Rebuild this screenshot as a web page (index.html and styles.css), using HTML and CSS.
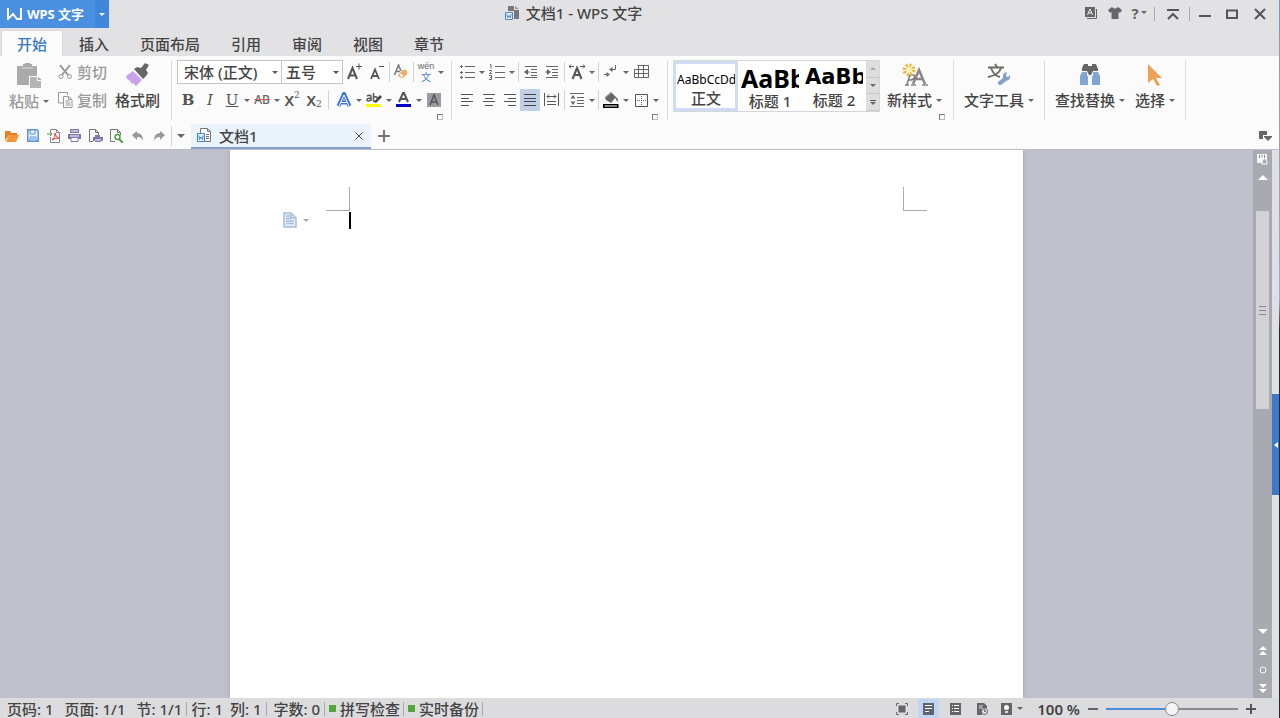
FILE: index.html
```html
<!DOCTYPE html>
<html lang="zh-Hans">
<head>
  <meta charset="UTF-8" />
  <meta name="viewport" content="width=device-width, initial-scale=1.0" />
  <title>文档1 - WPS 文字</title>
  <link rel="stylesheet" href="styles.css">
</head>
<body>
  <header class="titlebar">
    <button class="brand">
      <svg width="15" height="12" viewBox="0 0 15 12"><path d="M1 0v11l5-5 4 5h4V0" fill="none" stroke="#fff" stroke-width="2"/></svg>
      <span>WPS 文字</span>
    </button>
    <button class="brand-menu drop" aria-label="主菜单"></button>
    <h1 class="title">
      <svg width="16" height="16" viewBox="0 0 16 16"><path d="M4 1h6v4h5v9H10V6H4z" fill="#777"/><path d="M11 1l4 3h-4z" fill="#999"/><path d="M1.500 7.500h7v7h-7z" fill="#edf3fb" stroke="#4c86c8"/><path d="M3 9l.5 4L5 10.500 6.500 13 7 9" fill="none" stroke="#4c86c8"/></svg>
      文档1 - WPS 文字
    </h1>
    <div class="window-tools">
      <button class="wt" aria-label="字体"><svg width="12" height="12" viewBox="0 0 12 12"><path d="M0 0h10v10H0z" fill="#666"/><path d="M11.500 2v9.500H2" fill="none" stroke="#666"/><path d="M2.500 8L5 2l2.500 6M3.500 6h3" fill="none" stroke="#eee"/></svg></button>
      <button class="wt" aria-label="皮肤"><svg width="14" height="12" viewBox="0 0 14 12"><path d="M4 0q3 3 6 0l4 3-2 3-1.500-1v7h-7V5L2 6 0 3z" fill="#666"/></svg></button>
      <button class="wt help" aria-label="帮助">?<i class="arrow"></i></button>
      <span class="sep"></span>
      <button class="wt wide" aria-label="折叠功能区"><svg width="14" height="12" viewBox="0 0 14 12"><path d="M1 2h12M2 11l5-5 5 5" fill="none" stroke="#555" stroke-width="2"/></svg></button>
      <span class="sep slim"></span>
      <button class="wt wide" aria-label="最小化"><svg width="12" height="12" viewBox="0 0 12 12"><path d="M0 8h12" stroke="#555" stroke-width="2"/></svg></button>
      <button class="wt max" aria-label="最大化"><svg width="12" height="10" viewBox="0 0 12 10"><path d="M1 1.500h10v7.500H1z" fill="none" stroke="#555" stroke-width="2"/></svg></button>
      <button class="wt close" aria-label="关闭"><svg width="12" height="12" viewBox="0 0 12 12"><path d="M1 1l10 10M11 1L1 11" stroke="#555" stroke-width="2"/></svg></button>
    </div>
  </header>

  <nav class="menu-tabs">
    <a class="active" href="#">开始</a>
    <a href="#">插入</a>
    <a href="#">页面布局</a>
    <a href="#">引用</a>
    <a href="#">审阅</a>
    <a href="#">视图</a>
    <a href="#">章节</a>
  </nav>

  <section class="ribbon">
    <div class="group clipboard">
      <button class="big disabled">
        <svg width="26" height="26" viewBox="0 0 26 26"><path d="M1 3h6V1h2V0h5v1h2v2h5v10h-8v9H1z" fill="#aaa"/><path d="M6 5h11" stroke="#ddd"/><path d="M14 14h7v4h4v7H14z" fill="#b5b5b5"/><path d="M22 13.500v3.500h3.500z" fill="#aaa"/></svg>
        <span class="label">粘贴<i class="arrow"></i></span>
      </button>
      <div class="stack">
        <button class="small disabled">
          <svg width="15" height="16" viewBox="0 0 15 16"><path d="M2 1l8 10M12 1L4 11" stroke="#999" stroke-width="2"/><circle cx="3" cy="12.500" r="2" fill="none" stroke="#999"/><circle cx="11.500" cy="12.500" r="2" fill="none" stroke="#999"/></svg>
          剪切
        </button>
        <button class="small disabled">
          <svg width="15" height="16" viewBox="0 0 15 16"><path d="M5 11H.5V.5h9V3" fill="none" stroke="#999"/><path d="M5.500 4.500h5l3.500 3v8H5.500zM10.500 4.500v3H14M7.500 9h4M7.500 11h5M7.500 13h5" fill="none" stroke="#999"/></svg>
          复制
        </button>
      </div>
      <button class="big">
        <svg width="24" height="24" viewBox="0 0 24 24"><path d="M7 8l9 9-6 6-3-3-1 1-2-3-3-2-1-3z" fill="#c9a2ea"/><path d="M8 6l3-2 4 1 4-5 4 2-3 5 2 3-2 3-3 3z" fill="#666"/></svg>
        <span class="label">格式刷</span>
      </button>
    </div>

    <div class="group font">
      <div class="row">
        <select class="font-name" aria-label="字体名称"><option>宋体 (正文)</option></select>
        <select class="font-size" aria-label="字号"><option>五号</option></select>
        <button class="tool" aria-label="增大字号"><svg width="16" height="18" viewBox="0 0 16 18"><path d="M2 16L6.500 5 11 16M3.500 12.500h6" fill="none" stroke="#555" stroke-width="2"/><path d="M10 3.500h6M13 .5v6" stroke="#555"/></svg></button>
        <button class="tool" aria-label="减小字号"><svg width="16" height="18" viewBox="0 0 16 18"><path d="M3 16L7 6.500 11 16M4.500 13h5" fill="none" stroke="#555" stroke-width="1.800"/><path d="M11 3.500h5" stroke="#555"/></svg></button>
        <span class="sep slim"></span>
        <button class="tool narrow" aria-label="清除格式"><svg width="16" height="16" viewBox="0 0 16 16"><path d="M1.500 11L5.500 1 8 7M3 7.500h4" fill="none" stroke="#777" stroke-width="1.500"/><path d="M5 11l5-5q2-1 3.500.5T14 10l-4 4q-3 1-5-3z" fill="#efab68"/><path d="M6.500 11l1.500-1.500 2.500 2.500L9 13.500z" fill="#fff"/></svg></button>
        <span class="sep slim"></span>
        <button class="tool pinyin" aria-label="拼音指南"><small>wén</small><b>文</b></button>
        <button class="drop" aria-label="拼音选项"></button>
      </div>
      <div class="row">
        <button class="tool letter bold">B</button>
        <button class="tool letter italic">I</button>
        <button class="tool letter underline">U</button>
        <button class="drop" aria-label="下划线样式"></button>
        <button class="tool strike">AB</button>
        <button class="drop" aria-label="删除线选项"></button>
        <button class="tool script">X<sup>2</sup></button>
        <button class="tool script">X<sub>2</sub></button>
        <span class="sep"></span>
        <button class="tool" aria-label="文字效果"><svg width="16" height="16" viewBox="0 0 16 16"><path d="M2.500 14L8 2l5.500 12M4.500 10.500h7" fill="none" stroke="#c5d9f8" stroke-width="5"/><path d="M2.500 14L8 2l5.500 12M4.500 10.500h7" fill="none" stroke="#3b6fd0" stroke-width="3.500"/><path d="M3 14L8 3l5 11M5 10.500h6" fill="none" stroke="#fff"/></svg></button>
        <button class="drop" aria-label="文字效果选项"></button>
        <button class="tool" aria-label="突出显示"><svg width="16" height="16" viewBox="0 0 16 16"><path d="M1 4q4-2 4 1v4M5 6Q1 6 1 8t4 0M7.500 1v8q4 1 4-2t-4-2" fill="none" stroke="#555" stroke-width="1.500"/><path d="M8 10l6-7 2 2-6 6z" fill="#444"/><path d="M0 12h15v3H0z" fill="#ff0"/></svg></button>
        <button class="drop" aria-label="突出显示颜色"></button>
        <button class="tool" aria-label="字体颜色"><svg width="16" height="16" viewBox="0 0 16 16"><path d="M3 10L7.500 0 12 10M5 7h5" fill="none" stroke="#555" stroke-width="2"/><path d="M0 12h15v3H0z" fill="#0000c8"/></svg></button>
        <button class="drop" aria-label="选择字体颜色"></button>
        <button class="tool" aria-label="字符底纹"><svg width="14" height="14" viewBox="0 0 14 14"><path d="M0 0h14v14H0z" fill="#999ca3"/><path d="M3 12L7 2l4 10M4 9h6" fill="none" stroke="#555" stroke-width="1.500"/></svg></button>
      </div>
      <button class="launcher" aria-label="字体设置"></button>
    </div>

    <div class="group paragraph">
      <div class="row">
        <button class="tool" aria-label="项目符号"><svg width="15" height="14" viewBox="0 0 15 14"><path d="M5 1.500h10M5 7.500h10M5 12.500h10M0 1.500h3M1.500 0v3M0 7.500h3M1.500 6v3M0 12.500h3M1.500 11v3" stroke="#666"/></svg></button>
        <button class="drop" aria-label="项目符号选项"></button>
        <button class="tool" aria-label="编号"><svg width="16" height="16" viewBox="0 0 16 16"><path d="M6 2.500h10M6 8.500h10M6 13.500h10M1 .5h1v4M0 6.500h2.500v1L.5 9.500H3M0 11.500h2.500v4H0M1 13.500h1.500" fill="none" stroke="#666"/></svg></button>
        <button class="drop" aria-label="编号选项"></button>
        <span class="sep slim"></span>
        <button class="tool" aria-label="减少缩进"><svg width="14" height="14" viewBox="0 0 14 14"><path d="M1 1.500h12M7 4.500h6M7 7.500h6M7 10.500h6M1 12.500h12M1 7h5" stroke="#666"/><path d="M0 7l4-3v6z" fill="#666"/></svg></button>
        <button class="tool narrow" aria-label="增加缩进"><svg width="14" height="14" viewBox="0 0 14 14"><path d="M1 1.500h12M7 4.500h6M7 7.500h6M7 10.500h6M1 12.500h12M0 7h4" stroke="#666"/><path d="M6 7L2 4v6z" fill="#666"/></svg></button>
        <span class="sep slim"></span>
        <button class="tool" aria-label="中文版式"><svg width="16" height="16" viewBox="0 0 16 16"><path d="M3.500 15L8 4l4.500 11M5 11h6" fill="none" stroke="#555" stroke-width="2"/><path d="M0 2.500h5M11 2.500h5M2 .5l-2 2 2 2M14 .5l2 2-2 2" fill="none" stroke="#555"/></svg></button>
        <button class="drop" aria-label="中文版式选项"></button>
        <span class="sep slim"></span>
        <button class="tool" aria-label="显示段落标记"><svg width="14" height="14" viewBox="0 0 14 14"><path d="M11.500 0v4.500H6M0 9.500h5" fill="none" stroke="#666"/><path d="M5 4.500L8.500 2v5zM6 9.500L2.500 7v5z" fill="#666"/></svg></button>
        <button class="drop" aria-label="段落标记选项"></button>
        <button class="tool" aria-label="插入表格"><svg width="15" height="14" viewBox="0 0 15 14"><path d="M3.500.5h11v12H.5v-8h14M4.500.5v12M9.500.5v12M.5 8.500h14" fill="none" stroke="#666"/></svg></button>
      </div>
      <div class="row">
        <button class="tool" aria-label="左对齐"><svg width="12" height="12" viewBox="0 0 12 12"><path d="M0 .5h12M0 4.500h8M0 7.500h12M0 11.500h8" stroke="#555"/></svg></button>
        <button class="tool" aria-label="居中"><svg width="12" height="12" viewBox="0 0 12 12"><path d="M0 .5h12M2 4.500h8M0 7.500h12M2 11.500h8" stroke="#555"/></svg></button>
        <button class="tool narrow" aria-label="右对齐"><svg width="12" height="12" viewBox="0 0 12 12"><path d="M0 .5h12M4 4.500h8M0 7.500h12M4 11.500h8" stroke="#555"/></svg></button>
        <button class="tool narrow selected" aria-label="两端对齐"><svg width="12" height="12" viewBox="0 0 12 12"><path d="M0 .5h12M0 4.500h12M0 7.500h12M0 11.500h12" stroke="#444"/></svg></button>
        <button class="tool" aria-label="分散对齐"><svg width="15" height="14" viewBox="0 0 15 14"><path d="M.5 0v13M14.500 0v13M3 3.500h9M3 8.500h9M3 11.500h9M5 1.500l-2 2 2 2M10 1.500l2 2-2 2" fill="none" stroke="#555"/></svg></button>
        <span class="sep slim"></span>
        <button class="tool" aria-label="行距"><svg width="15" height="14" viewBox="0 0 15 14"><path d="M0 .5h14M7 4.500h7M7 7.500h7M7 10.500h7M0 13.500h14" stroke="#666"/><path d="M3 2L.5 5.500h5zM3 12L.5 8.500h5z" fill="#666"/></svg></button>
        <button class="drop" aria-label="行距选项"></button>
        <span class="sep slim"></span>
        <button class="tool" aria-label="底纹颜色"><svg width="16" height="16" viewBox="0 0 16 16"><path d="M2 5l6-5 5 5-5 6-5-3zM12 5q3 0 3 5-2-1-3-5z" fill="#666"/><path d="M3 5l5-4" stroke="#aaa"/><path d="M.75 12.750h14v2.500h-14z" fill="#fff" stroke="#000" stroke-width="1.500"/></svg></button>
        <button class="drop" aria-label="选择底纹"></button>
        <button class="tool" aria-label="边框"><svg width="13" height="13" viewBox="0 0 13 13"><path d="M.5.5h12v12H.5z" fill="none" stroke="#555"/><path d="M6.500 2v10M2 6.500h10" stroke="#666" stroke-dasharray="1 1"/></svg></button>
        <button class="drop" aria-label="边框选项"></button>
      </div>
      <button class="launcher" aria-label="段落设置"></button>
    </div>

    <div class="group styles">
      <div class="big-row">
        <div class="gallery">
          <button class="style-item current"><span class="sample">AaBbCcDd</span><span class="name">正文</span></button>
          <button class="style-item"><span class="sample h1">AaBb</span><span class="name">标题 1</span></button>
          <button class="style-item"><span class="sample h2">AaBb</span><span class="name">标题 2</span></button>
          <div class="gallery-scroll">
            <button aria-label="向上"><i class="arrow up"></i></button>
            <button aria-label="向下"><i class="arrow"></i></button>
            <button class="more" aria-label="更多样式"><i class="arrow"></i></button>
          </div>
        </div>
        <button class="big">
          <svg width="26" height="24" viewBox="0 0 26 24"><path d="M11 21l6-14 6 14M14 16h7" fill="none" stroke="#888" stroke-width="2.500"/><path d="M9 22h5M20 22h6" stroke="#888" stroke-width="1.500"/><path d="M5 21l3-9h4q2 4-3 5H7M3 22h4" fill="none" stroke="#777" stroke-width="1.500"/><circle cx="7" cy="7" r="4.500" fill="none" stroke="#f0b840" stroke-width="4" stroke-dasharray="2 1.500"/><circle cx="7" cy="7" r="2" fill="#fff3b0"/></svg>
          <span class="label">新样式<i class="arrow"></i></span>
        </button>
      </div>
      <button class="launcher" aria-label="样式设置"></button>
    </div>

    <div class="group tools">
      <button class="big">
        <svg width="24" height="24" viewBox="0 0 24 24"><path d="M1 4.500h16M8 1l2 3M4 5q3 8 9 9M14 5q-2 7-13 9" fill="none" stroke="#6c6c64" stroke-width="1.800"/><path d="M11 19l5-4q-1-5 4-6l-1 4 2 1 2-2q1 5-4 6l-5 4q-4 0-3-3z" fill="#869fcb"/></svg>
        <span class="label">文字工具<i class="arrow"></i></span>
      </button>
    </div>

    <div class="group find">
      <button class="big">
        <svg width="22" height="24" viewBox="0 0 22 24"><path d="M5 1h4v2h4V1h4l2 5v2h-5l-2 4h-2L8 8H3V5z" fill="#666"/><path d="M3 9h5v4h1v9H1v-9zM14 9h5l2 4v9h-8v-9h1z" fill="#83a5d1"/></svg>
        <span class="label">查找替换<i class="arrow"></i></span>
      </button>
      <button class="big">
        <svg width="16" height="24" viewBox="0 0 16 24"><path d="M1 1l14 14H9l4 7-3 1-4-7-5 4z" fill="#ee9f58"/></svg>
        <span class="label">选择<i class="arrow"></i></span>
      </button>
    </div>
  </section>

  <div class="doc-bar">
    <button class="quick" aria-label="打开"><svg width="14" height="12" viewBox="0 0 14 12"><path d="M0 11V1h5l1 2h6v2H4z" fill="#e87e1c"/><path d="M4 5h10l-3 7H1z" fill="#f39537"/></svg></button>
    <button class="quick" aria-label="保存"><svg width="12" height="13" viewBox="0 0 12 13"><path d="M.750.750h9l1.500 1.500v10H.75z" fill="#e9f2fc" stroke="#5b92d8" stroke-width="1.500"/><path d="M3 1v4h5V1M3 12V8h6v4M4 10h4" fill="none" stroke="#5b92d8"/></svg></button>
    <button class="quick" aria-label="输出为PDF"><svg width="13" height="14" viewBox="0 0 13 14"><path d="M3.500 3V.5h6l3 3v10h-9V8M9.500.5v3h3" fill="none" stroke="#888"/><path d="M0 5h4M3 3l2 2-2 2" fill="none" stroke="#4c9b50"/><path d="M5 11q4-3 3-7 1 5 4 5-4 0-7 2z" fill="none" stroke="#d5423b"/></svg></button>
    <button class="quick" aria-label="打印"><svg width="13" height="13" viewBox="0 0 13 13"><path d="M2 0h9v4H2zM0 5h13v5H0z" fill="#7e79ad"/><path d="M3 2h7M2 7h9" stroke="#fff"/><path d="M3 8.500h7v4H3z" fill="#fff" stroke="#7e79ad"/></svg></button>
    <button class="quick" aria-label="打印设置"><svg width="14" height="14" viewBox="0 0 14 14"><path d="M4 12.500H.5V.5h6l3 3V6M6.500.5v3h3" fill="none" stroke="#777"/><path d="M6 6h5v2H6zM4 8h10v4H4zM6 10h6v3H6z" fill="#7e79ad"/><path d="M6 11h6" stroke="#fff"/></svg></button>
    <button class="quick" aria-label="打印预览"><svg width="13" height="14" viewBox="0 0 13 14"><path d="M5 12.500H.5V.5h7l3 3V6M7.500.5v3h3" fill="none" stroke="#777"/><circle cx="7.500" cy="8" r="2.500" fill="#fff" stroke="#529b4b" stroke-width="1.500"/><path d="M9 10l4 4" stroke="#529b4b" stroke-width="2"/></svg></button>
    <button class="quick" aria-label="撤消"><svg width="12" height="10" viewBox="0 0 12 10"><path d="M0 4l5-4v2q6 0 6 8-1-4-6-4v3z" fill="#999"/></svg></button>
    <button class="quick" aria-label="恢复"><svg width="12" height="10" viewBox="0 0 12 10"><path d="M12 4L7 0v2Q1 2 1 10q1-4 6-4v3z" fill="#999"/></svg></button>
    <span class="sep slim"></span>
    <button class="quick-more" aria-label="自定义快速访问"><i class="arrow"></i></button>
    <div class="doc-tab">
      <svg width="15" height="15" viewBox="0 0 15 15"><path d="M3.500 6V.5h7l3 3v10h-6M10.500.5v3h3M9 6.500h3M9 8.500h3M9 10.500h3" fill="#fff" stroke="#777"/><path d="M.5 5.500h7v8h-7z" fill="#e8f1fb" stroke="#4384cc"/><path d="M2 7.500l.5 4L4 9l1.500 2.500.5-4" fill="none" stroke="#4384cc"/></svg>
      <span class="doc-name">文档1</span>
      <button aria-label="关闭文档"><svg width="8" height="8" viewBox="0 0 8 8"><path d="M.5.5l7 7M7.500.5l-7 7" stroke="#444"/></svg></button>
    </div>
    <button class="new-tab" aria-label="新建文档"><svg width="12" height="12" viewBox="0 0 12 12"><path d="M0 6h12M6 0v12" stroke="#777" stroke-width="2"/></svg></button>
    <button class="tab-list" aria-label="文档列表"><svg width="13" height="11" viewBox="0 0 13 11"><path d="M0 1h8v4H4v4H0z" fill="#666"/><path d="M5 6h8v1L9 11 5 7z" fill="#666"/></svg></button>
  </div>

  <div class="workspace">
    <main class="canvas">
      <article class="page">
        <div class="margins"><span class="mark left"></span><span class="mark right"></span></div>
        <div class="line">
          <button class="smart" aria-label="段落布局">
            <svg width="14" height="16" viewBox="0 0 14 16"><path d="M1 1h7l5 5v9H1z" fill="#e4edf8" stroke="#a7bddf" stroke-width="1.500"/><path d="M3 4h4M3 6.500h5M3 9h8M3 11.500h8M8 1v5h5" fill="none" stroke="#a7bddf" stroke-width="1.500"/></svg>
            <i class="arrow"></i>
          </button>
          <span class="cursor"></span>
        </div>
      </article>
    </main>
    <div class="scrollbar">
      <button aria-label="显示标尺"><svg width="11" height="11" viewBox="0 0 11 11"><path d="M0 0h10v9H0z" fill="#f4f4f6"/><path d="M2.500 1v3M5 1v2M7.500 1v3" stroke="#888"/><path d="M5 10V7l2.500-3L10 7v3z" fill="#a8a9b1" stroke="#fff"/></svg></button>
      <button class="up" aria-label="向上滚动"><svg width="10" height="6" viewBox="0 0 10 6"><path d="M0 6l5-5 5 5z" fill="#fff"/></svg></button>
      <div class="track"><div class="thumb"><i></i><i></i><i></i></div></div>
      <button aria-label="向下滚动"><svg width="10" height="6" viewBox="0 0 10 6"><path d="M0 0l5 5 5-5z" fill="#fff"/></svg></button>
      <button aria-label="上一页"><svg width="8" height="9" viewBox="0 0 8 9"><path d="M0 4l4-4 4 4zM0 9l4-4 4 4z" fill="#fff"/></svg></button>
      <button aria-label="选择浏览对象"><svg width="8" height="8" viewBox="0 0 8 8"><circle cx="4" cy="4" r="3" fill="none" stroke="#fff"/></svg></button>
      <button aria-label="下一页"><svg width="8" height="9" viewBox="0 0 8 9"><path d="M0 0l4 4 4-4zM0 5l4 4 4-4z" fill="#fff"/></svg></button>
    </div>
    <aside class="side">
      <button aria-label="展开任务窗格"><svg width="4" height="6" viewBox="0 0 4 6"><path d="M4 0v6L0 3z" fill="#fff"/></svg></button>
    </aside>
  </div>

  <footer class="statusbar">
    <div class="info">
      <span class="cell"><span>页码: 1</span><span>页面: 1/1</span><span>节: 1/1</span></span>
      <span class="cell near"><span>行: 1</span><span>列: 1</span></span>
      <span class="cell"><span>字数: 0</span></span>
      <button class="cell check"><i></i>拼写检查</button>
      <button class="cell check"><i></i>实时备份</button>
    </div>
    <div class="views">
      <button aria-label="全屏显示"><svg width="12" height="12" viewBox="0 0 12 12"><path d="M2.500 2.500h7v7h-7z" fill="#666"/><path d="M.5 3V.5H3M9 .5h2.500V3M11.500 9v2.500H9M3 11.500H.5V9" fill="none" stroke="#666"/></svg></button>
      <button class="on" aria-label="页面视图"><svg width="11" height="12" viewBox="0 0 11 12"><path d="M0 0h11v12H0z" fill="#5e6470"/><path d="M2 2.500h7M2 5.500h7M2 8.500h4" stroke="#fff"/></svg></button>
      <button aria-label="大纲视图"><svg width="11" height="12" viewBox="0 0 11 12"><path d="M0 0h11v12H0z" fill="#666"/><path d="M2 2.500h1M4 2.500h5M2 5.500h1M4 5.500h5M2 8.500h1M4 8.500h5" stroke="#fff"/></svg></button>
      <button aria-label="Web版式"><svg width="11" height="12" viewBox="0 0 11 12"><path d="M0 0h7l3 3v2H5v7H0z" fill="#666"/><path d="M2 3h4M2 5h3" stroke="#ddd"/><circle cx="7.500" cy="8.500" r="3" fill="#ddd" stroke="#666"/><path d="M7.500 6.500v2H9" fill="none" stroke="#666"/></svg></button>
      <button class="eye" aria-label="护眼模式"><svg width="11" height="12" viewBox="0 0 11 12"><path d="M0 0h11v12H0z" fill="#666"/><circle cx="5.500" cy="4.500" r="2.500" fill="#fff"/><path d="M4 8h3v2H4z" fill="#ddd"/></svg></button>
      <button class="drop" aria-label="护眼选项"></button>
    </div>
    <div class="zoom">
      <label for="zoom">100 %</label>
      <button aria-label="缩小"><svg width="10" height="10" viewBox="0 0 10 10"><path d="M0 5h10" stroke="#666" stroke-width="2"/></svg></button>
      <input id="zoom" type="range" min="0" max="200" value="100">
      <button aria-label="放大"><svg width="10" height="10" viewBox="0 0 10 10"><path d="M0 5h10M5 0v10" stroke="#555" stroke-width="2"/></svg></button>
    </div>
  </footer>
</body>
</html>
```
FILE: styles.css
```css
* {
  box-sizing: border-box;
}
body {
  margin: 0;
  height: 100vh;
  display: flex;
  flex-direction: column;
  padding-right: 1px;
  overflow: hidden;
  font: 500 15px/20px "Noto Sans", "Noto Sans CJK SC", sans-serif;
  color: #444;
  background: linear-gradient(#6d9dd0 0, #6d9dd0 32px, #999 32px, #8eb0d4 300px, #202830 330px, #202830 100%);
}
button, select, input {
  font: inherit;
  color: inherit;
  margin: 0;
  padding: 0;
  border: 0;
  background: none;
}
button {
  display: flex;
  align-items: center;
  justify-content: center;
  flex: none;
  white-space: nowrap;
}
svg {
  display: block;
  flex: none;
}

/* small down arrow */
.arrow, .drop::after {
  content: "";
  flex: none;
  border: 3px solid transparent;
  border-top-color: #666;
  border-bottom: 0;
}
.arrow.up {
  border-top: 0;
  border-bottom: 3px solid #aaa;
}
.drop {
  width: 8px;
  height: 100%;
}
.sep {
  flex: none;
  width: 1px;
  height: 20px;
  margin: 0 4px 0 3px;
  background: #d2d2d4;
}
.sep.slim {
  margin: 0 1px 0 2px;
}

/* title bar */
.titlebar {
  display: flex;
  height: 28px;
  background: #e2e2e4;
}
.brand {
  width: 95px;
  gap: 5px;
  padding-right: 4px;
  background: #4a8fe0;
  color: #fff;
  font-size: 13px;
  font-weight: 700;
}
.brand-menu {
  width: 14px;
  background: #4087dc;
}
.brand-menu::after {
  border-top-color: #fff;
}
.title {
  flex: 1;
  display: flex;
  align-items: center;
  justify-content: center;
  gap: 6px;
  margin: 0;
  padding-bottom: 2px;
  font-size: 15px;
  font-weight: 500;
}
.window-tools {
  display: flex;
  align-items: center;
  justify-content: flex-end;
  width: 242px;
  padding-right: 4px;
}
.window-tools .sep {
  height: 14px;
  background: #aaa;
}
.wt {
  width: 24px;
  height: 24px;
  padding-bottom: 3px;
}
.wt.wide, .wt.max, .wt.close {
  width: 28px;
  padding-bottom: 0;
}
.wt.max {
  width: 26px;
}
.wt.close {
  width: 30px;
}
.help {
  gap: 2px;
  font-weight: 700;
  color: #666;
}

/* menu */
.menu-tabs {
  display: flex;
  gap: 1px;
  height: 28px;
  padding: 3px 0 0 2px;
  background: #e2e2e4;
}
.menu-tabs a {
  padding: 3px 15px 0;
  color: #444;
  text-decoration: none;
}
.menu-tabs .active {
  margin-right: 1px;
  background: #fbfbfb;
  color: #3d78c3;
  box-shadow: 0 0 1px #aaa;
  clip-path: inset(-1px -1px 0 -1px);
}

/* ribbon */
.ribbon {
  display: flex;
  padding: 4px 0 2px;
  background: #fbfbfb;
}
.group {
  height: 60px;
  border-right: 1px solid #dcdcde;
}
.clipboard {
  display: flex;
  padding: 0 11px 0 9px;
}
.stack {
  display: flex;
  flex-direction: column;
  gap: 4px;
  margin: 0 8px 0 9px;
}
.small {
  height: 24px;
  gap: 4px;
}
.big {
  flex-direction: column;
  height: 52px;
}
.big svg {
  margin: 3px 0 1px;
}
.label {
  display: flex;
  align-items: center;
  gap: 4px;
  height: 24px;
  color: #444;
}
.disabled, .disabled .label {
  color: #999;
}
.font {
  padding: 0 6px 0 5px;
}
.paragraph {
  padding: 0 7px 0 4px;
}
.font, .paragraph, .styles {
  display: flex;
  flex-direction: column;
}
.row {
  display: flex;
  align-items: center;
  height: 24px;
}
.row + .row {
  margin-top: 4px;
}
.tool {
  width: 22px;
  height: 22px;
}
.tool.narrow {
  width: 20px;
}
.selected {
  background: #c1d0e8;
}
.row select {
  height: 24px;
  padding-left: 6px;
  border: 1px solid #c6c6c8;
  border-radius: 0;
  appearance: none;
  background: #fff url("data:image/svg+xml,%3Csvg xmlns='http://www.w3.org/2000/svg' width='6' height='3'%3E%3Cpath d='M0 0h6L3 3z' fill='%23555'/%3E%3C/svg%3E") no-repeat right 3px center;
}
.row .font-name {
  width: 105px;
}
.row .font-size {
  width: 61px;
  padding-left: 4px;
  border-left: 0;
}
.pinyin {
  flex-direction: column;
  color: #666;
}
.pinyin small {
  font: 9px/9px "Liberation Sans", sans-serif;
}
.pinyin b {
  font: 400 10px/11px "Noto Sans CJK SC", sans-serif;
  color: #4b82c4;
}
.letter {
  font: 700 15px/20px "DejaVu Serif", serif;
  color: #555;
}
.italic {
  font-style: italic;
  font-weight: 400;
}
.underline {
  font-weight: 400;
  text-decoration: underline;
}
.strike {
  font-size: 12px;
  color: #666;
  text-decoration: line-through #d26060;
}
.script {
  font-weight: 600;
  color: #555;
}
.script sup, .script sub {
  font: 9px/10px "DejaVu Serif", serif;
}
.script sup {
  padding-bottom: 10px;
}
.script sub {
  padding-top: 8px;
}
.launcher {
  align-self: flex-end;
  width: 6px;
  height: 6px;
  margin: 2px 2px 0 0;
  border: 1px solid #777;
  border-right-color: #bbb;
  border-bottom-color: #bbb;
}

/* style gallery */
.styles {
  padding: 0 6px 0 5px;
}
.big-row {
  display: flex;
  gap: 7px;
  margin-right: 5px;
}
.gallery {
  display: flex;
  height: 52px;
  background: #fff;
  border: 1px solid #d6d6da;
  border-left: 0;
}
.style-item {
  width: 64px;
  flex-direction: column;
  overflow: hidden;
  padding: 0 3px;
}
.style-item.current {
  width: 65px;
  border: 3px solid #cfdcf2;
  padding: 2px 0 0 1px;
}
.sample {
  width: 100%;
  height: 28px;
  font-size: 12px;
  font-weight: 400;
  line-height: 28px;
  color: #000;
  text-align: left;
  overflow: hidden;
}
.sample.h1 {
  height: 29px;
  font-size: 25px;
  font-weight: 700;
  line-height: 32px;
}
.sample.h2 {
  font: 700 21px/30px "DejaVu Sans", sans-serif;
}
.name {
  height: 20px;
}
.gallery-scroll {
  display: flex;
  flex-direction: column;
  width: 13px;
}
.gallery-scroll button {
  flex: 1;
  background: #dedee0;
  border-bottom: 1px solid #c8c8ca;
}
.gallery-scroll .more {
  flex-direction: column;
  gap: 1px;
}
.more::before {
  content: "";
  width: 6px;
  height: 1px;
  background: #555;
}
.tools, .find {
  display: flex;
  gap: 10px;
  padding: 0 10px;
}

/* quick access and document tabs */
.doc-bar {
  display: flex;
  align-items: center;
  height: 28px;
  padding-left: 1px;
  background: #fbfbfb;
  border-bottom: 1px solid #bcbdc4;
}
.quick {
  width: 21px;
  height: 24px;
}
.quick-more {
  width: 16px;
  height: 24px;
}
.quick-more .arrow {
  border-width: 4px 4px 0;
}
.doc-tab {
  display: flex;
  align-items: center;
  align-self: flex-end;
  width: 180px;
  height: 25px;
  margin-left: 2px;
  padding: 0 8px 0 6px;
  background: #eaf2fc;
  border-bottom: 2px solid #879fcb;
}
.doc-name {
  flex: 1;
  padding-left: 7px;
}
.new-tab {
  width: 26px;
  height: 24px;
}
.tab-list {
  margin: 0 7px 0 auto;
}

/* document area */
.workspace {
  flex: 1;
  display: flex;
  min-height: 0;
}
.canvas {
  flex: 1;
  display: flex;
  justify-content: center;
  background: #bfc2cc;
}
.page {
  width: 793px;
  padding: 37px 96px 0 53px;
  background: #fff;
  box-shadow: 0 0 4px #9a9ca6;
  clip-path: inset(0 -5px);
}
.margins {
  display: flex;
  justify-content: space-between;
  padding-left: 43px;
}
.mark {
  width: 24px;
  height: 24px;
  border-bottom: 1px solid #aaa;
}
.mark.left {
  border-right: 1px solid #aaa;
}
.mark.right {
  border-left: 1px solid #aaa;
}
.line {
  display: flex;
  padding-top: 1px;
}
.smart {
  width: 66px;
  height: 16px;
  gap: 6px;
  justify-content: flex-start;
}
.smart .arrow {
  border-top-color: #aaa;
}
.cursor {
  width: 2px;
  height: 17px;
  background: #000;
}
.scrollbar {
  display: flex;
  flex-direction: column;
  width: 19px;
  background: #a8a9b1;
}
.scrollbar button {
  height: 19px;
}
.scrollbar .up {
  height: 16px;
}
.track {
  flex: 1;
  padding: 26px 3px 0;
}
.thumb {
  display: flex;
  flex-direction: column;
  align-items: center;
  justify-content: center;
  gap: 3px;
  height: 198px;
  background: #d2d2d6;
}
.thumb i {
  width: 7px;
  height: 1px;
  background: #888;
}
.side {
  display: flex;
  flex-direction: column;
  width: 7px;
  padding-top: 244px;
  background: #e0e0e2;
}
.side button {
  height: 101px;
  background: #3b7ac9;
}

/* status bar */
.statusbar {
  display: flex;
  align-items: center;
  justify-content: space-between;
  height: 20px;
  padding-top: 1px;
  background: #dcdcde;
}
.info, .views, .zoom {
  display: flex;
  align-items: center;
}
.info {
  flex: 1;
  padding-left: 7px;
}
.cell {
  display: flex;
  align-items: center;
  gap: 11px;
  height: 14px;
  padding-right: 4px;
  margin-right: 4px;
  border-right: 1px solid #aaa;
}
.cell.near {
  gap: 7px;
  margin-right: 7px;
}
.check {
  gap: 4px;
  padding-right: 3px;
}
.check i {
  width: 7px;
  height: 7px;
  background: #55a63a;
}
.views button {
  width: 27px;
  height: 19px;
}
.views .on {
  background: linear-gradient(#c0d5f0, #c0d5f0) center / 21px 19px no-repeat;
}
.views .eye {
  width: 20px;
}
.views .drop {
  width: 8px;
}
.zoom {
  gap: 5px;
  padding: 0 20px 0 13px;
}
.zoom label {
  font-weight: 600;
}
.zoom button {
  width: 16px;
  height: 19px;
}
.zoom input {
  appearance: none;
  width: 132px;
  height: 16px;
}
.zoom input::-webkit-slider-runnable-track {
  height: 2px;
  background: linear-gradient(90deg, #4a8fe0 50%, #8a8a8a 50%);
}
.zoom input::-webkit-slider-thumb {
  appearance: none;
  width: 14px;
  height: 14px;
  margin-top: -6px;
  border: 1px solid #888;
  border-radius: 50%;
  background: #f4f4f4;
}
```
